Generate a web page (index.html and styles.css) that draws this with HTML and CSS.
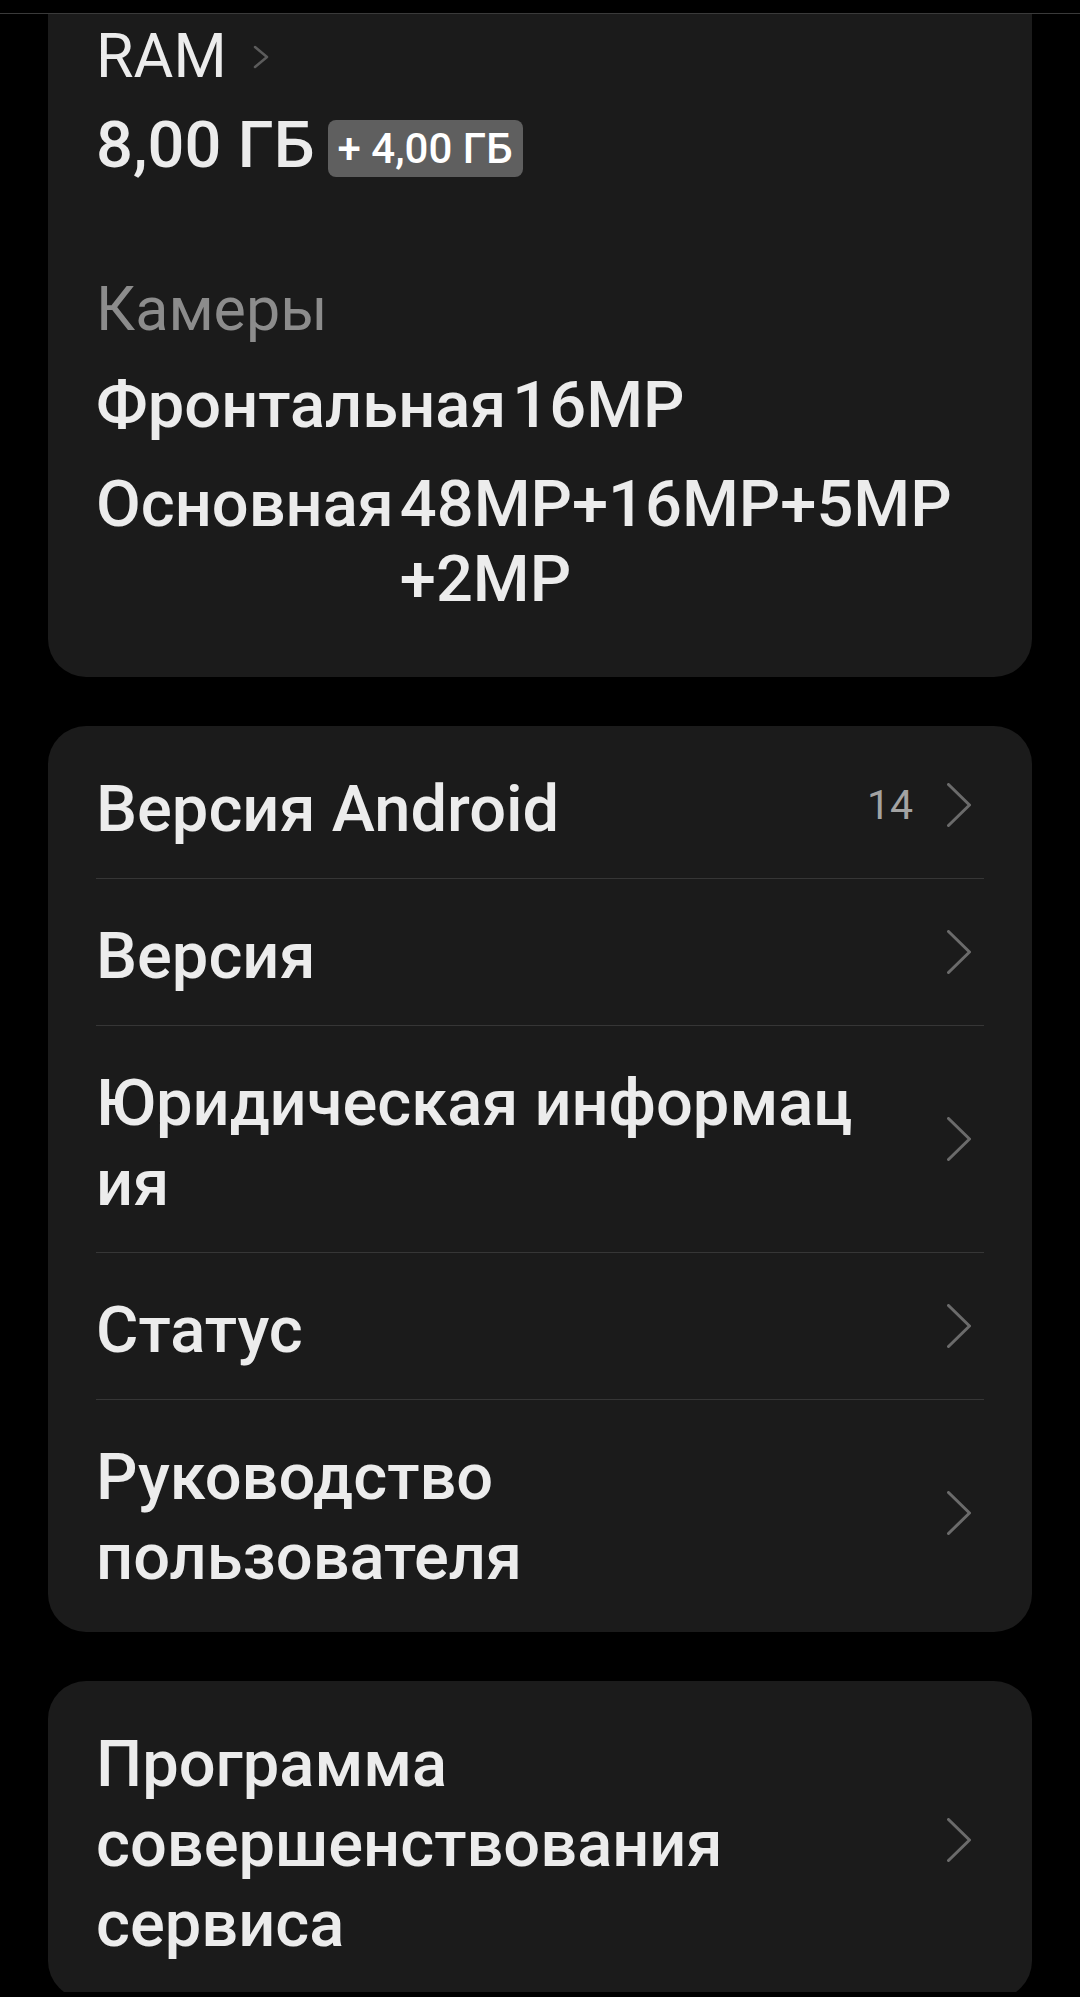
FILE: index.html
```html
<!DOCTYPE html>
<html lang="ru">
<head>
    <meta charset="UTF-8">
    <meta name="viewport" content="width=device-width, initial-scale=1.0">
    <title>Об устройстве</title>
    <link rel="stylesheet" href="styles.css">
</head>
<body>
    <div class="phone">
        <div class="topbar"></div>

        <div class="scroller">
            <div class="list">
                <!-- memory and cameras -->
                <section class="card specs">
                    <div class="spec">
                        <div class="spec-label link">
                            RAM
                            <svg class="chev-small" viewBox="0 0 16 24" width="16" height="24">
                                <path d="M2 2 L14 12 L2 22" />
                            </svg>
                        </div>
                        <div class="ram-value">
                            <span>8,00 ГБ</span>
                            <span class="badge">+ 4,00 ГБ</span>
                        </div>
                    </div>

                    <div class="spec spec-cams">
                        <div class="spec-label muted">Камеры</div>
                        <div class="cam-list">
                            <div class="cam-row">
                                <span class="cam-name">Фронтальная</span>
                                <span class="cam-value">16MP</span>
                            </div>
                            <div class="cam-row">
                                <span class="cam-name">Основная</span>
                                <span class="cam-value">48MP+16MP+5MP<wbr>+2MP</span>
                            </div>
                        </div>
                    </div>
                </section>

                <section class="card menu">
                    <div class="menu-item">
                        <span class="menu-title">Версия Android</span>
                        <span class="menu-value">14</span>
                        <svg class="chev" viewBox="0 0 24 44" width="24" height="44"><path d="M1.5 1.5 L22.5 22 L1.5 42.5" /></svg>
                    </div>
                    <div class="menu-item">
                        <span class="menu-title">Версия</span>
                        <svg class="chev" viewBox="0 0 24 44" width="24" height="44"><path d="M1.5 1.5 L22.5 22 L1.5 42.5" /></svg>
                    </div>
                    <div class="menu-item">
                        <span class="menu-title">Юридическая информац<wbr>ия</span>
                        <svg class="chev" viewBox="0 0 24 44" width="24" height="44"><path d="M1.5 1.5 L22.5 22 L1.5 42.5" /></svg>
                    </div>
                    <div class="menu-item">
                        <span class="menu-title">Статус</span>
                        <svg class="chev" viewBox="0 0 24 44" width="24" height="44"><path d="M1.5 1.5 L22.5 22 L1.5 42.5" /></svg>
                    </div>
                    <div class="menu-item">
                        <span class="menu-title">Руководство пользователя</span>
                        <svg class="chev" viewBox="0 0 24 44" width="24" height="44"><path d="M1.5 1.5 L22.5 22 L1.5 42.5" /></svg>
                    </div>
                </section>

                <section class="card menu">
                    <div class="menu-item">
                        <span class="menu-title">Программа совершенствования сервиса</span>
                        <svg class="chev" viewBox="0 0 24 44" width="24" height="44"><path d="M1.5 1.5 L22.5 22 L1.5 42.5" /></svg>
                    </div>
                </section>
            </div>
        </div>
    </div>
</body>
</html>
```

FILE: styles.css
```css
body {
    margin: 0;
    background: #000;
    color: #ececec;
    font-family: Roboto, "Noto Sans", sans-serif;
}

.phone {
    height: 1992px;
    overflow: hidden;
    display: flex;
    flex-direction: column;
}

.topbar {
    height: 13px;
    flex: none;
    border-bottom: 1px solid #3a3a3a;
}

.scroller {
    flex: 1;
    overflow: hidden;
    padding: 0 48px;
}

/* list is scrolled a bit, first card's top is out of view */
.list {
    margin-top: -40px;
}

.card {
    background: #1b1b1b;
    border-radius: 38px;
}

.card + .card {
    margin-top: 49px;
}

/* specs card */
.specs {
    padding: 42px 48px 60px;
}

.spec-label {
    font-size: 61px;
    line-height: 80px;
    display: flex;
    align-items: center;
}

.spec-label.muted {
    color: #8c8c8c;
}

.chev-small {
    margin-left: 26px;
    margin-top: 2px;
}

.chev-small path {
    fill: none;
    stroke: #5c5c5c;
    stroke-width: 2.5;
    stroke-linecap: round;
    stroke-linejoin: round;
}

.ram-value {
    margin-top: 9px;
    display: flex;
    align-items: center;
    gap: 13px;
    font-size: 65px;
    font-weight: 500;
    line-height: 80px;
}

.badge {
    background: #5f5f5f;
    color: #fff;
    border-radius: 8px;
    font-size: 42px;
    line-height: 57px;
    padding: 0 10px;
    margin-top: 6px;
}

.spec-cams {
    margin-top: 84px;
}

.cam-list {
    margin-top: 19px;
    display: flex;
    flex-direction: column;
    gap: 24px;
}

.cam-row {
    display: flex;
    gap: 6px;
    font-size: 65px;
    font-weight: 500;
    line-height: 75px;
}

.cam-name {
    flex: none;
}

.cam-value {
    flex: 1;
    min-width: 0;
}

/* menu cards */
.menu {
    padding: 6px 48px;
}

.menu-item {
    display: flex;
    align-items: center;
}

.menu-item + .menu-item {
    border-top: 1px solid #363636;
}

.menu-title {
    flex: 1;
    min-width: 0;
    padding: 37px 47px 29px 0;
    font-size: 65px;
    font-weight: 500;
    line-height: 80px;
}

.menu-value {
    font-size: 41px;
    color: #a3a3a3;
    margin-right: 34px;
}

.chev {
    flex: none;
    margin-right: 13px;
}

.chev path {
    fill: none;
    stroke: #6b6b6b;
    stroke-width: 3;
    stroke-linecap: round;
    stroke-linejoin: round;
}
```
